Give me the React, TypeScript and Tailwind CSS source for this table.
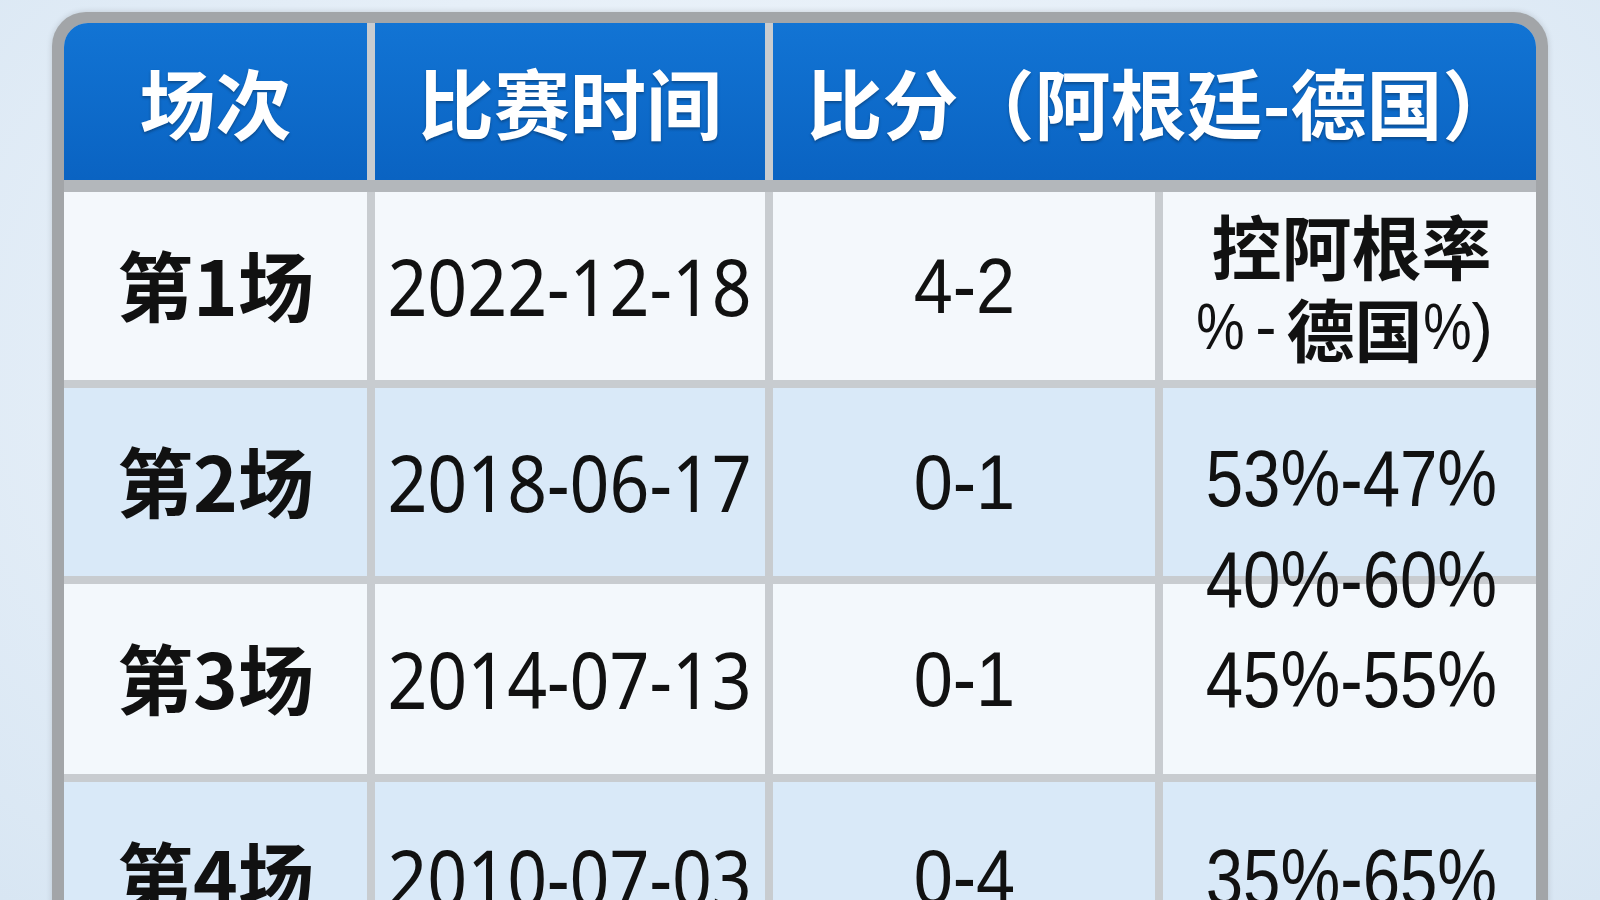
import React from "react";

const CJK = "font-['Noto_Sans_CJK_SC','Noto_Sans',sans-serif]";
const NUM = "font-['Liberation_Sans',Arial,sans-serif]";
const DATE = "font-['Noto_Sans','Liberation_Sans',sans-serif]";

type Row = {
  name: string;
  date: string;
  score: string;
  pos: string | null;
  extra?: string;
  bg: string;
  h: string;
};

const rows: Row[] = [
  { name: "第1场", date: "2022-12-18", score: "4-2", pos: null, bg: "bg-[#f4f8fc]", h: "h-[188px]" },
  { name: "第2场", date: "2018-06-17", score: "0-1", pos: "53%-47%", extra: "40%-60%", bg: "bg-[#d9e9f8]", h: "h-[188px]" },
  { name: "第3场", date: "2014-07-13", score: "0-1", pos: "45%-55%", bg: "bg-[#f3f8fc]", h: "h-[190px]" },
  { name: "第4场", date: "2010-07-03", score: "0-4", pos: "35%-65%", bg: "bg-[#d9e9f8]", h: "h-[190px]" },
];

function Pct({ text }: { text: string }) {
  return (
    <span className={`${NUM} inline-block scale-x-[0.84] whitespace-nowrap text-[80px] leading-[101px] text-[#111]`}>{text}</span>
  );
}

export default function App() {
  return (
    <div className="w-[1600px] h-[900px] overflow-hidden bg-[radial-gradient(ellipse_at_50%_40%,#f5f9fd_0%,#e6eff8_55%,#d8e6f3_100%)]">
      <div className="ml-[52px] mt-[12px] w-[1496px] rounded-t-[34px] bg-[#a2a5a8] px-[12px] pt-[11px] shadow-[0_0_6px_rgba(0,0,0,0.15)]">
        <div className="flex flex-col overflow-hidden rounded-t-[24px] bg-[#c8ccd0]">
          {/* header */}
          <div className="grid h-[157px] grid-cols-[303px_390px_763px] gap-x-[8px]">
            {[
              <span key="a">场次</span>,
              <span key="b">比赛时间</span>,
              <span key="c" className="pr-[22px]">
                比分（阿根廷-德国<span className="[font-feature-settings:'halt']">）</span>
              </span>,
            ].map((t, i) => (
              <div
                key={i}
                className={`${CJK} flex items-center justify-center whitespace-nowrap bg-linear-to-b from-[#1274d4] to-[#0a63c2] text-[76px] font-bold leading-none text-white [text-shadow:0_2px_3px_rgba(0,0,0,0.3)]`}
              >
                <span className="-mt-[2px]">{t}</span>
              </div>
            ))}
          </div>
          <div className="h-[12px] bg-[#b3b7bb]" />
          {/* body */}
          <div className="flex flex-col gap-y-[8px]">
            {rows.map((r) => (
              <div key={r.name} className={`grid ${r.h} grid-cols-[303px_390px_382px_373px] grid-rows-[100%] gap-x-[8px]`}>
                <div className={`${r.bg} ${CJK} flex items-center justify-center whitespace-nowrap text-[76px] font-bold leading-none text-[#111]`}>
                  <span className="-mt-[6px]">{r.name}</span>
                </div>
                <div className={`${r.bg} flex items-center justify-center`}>
                  <span className={`${DATE} inline-block scale-x-[0.895] whitespace-nowrap text-[78px] leading-none text-[#111]`}>{r.date}</span>
                </div>
                <div className={`${r.bg} flex items-center justify-center`}>
                  <span className={`${NUM} inline-block scale-x-[0.9] whitespace-nowrap text-[78px] leading-none text-[#111]`}>{r.score}</span>
                </div>
                {r.pos === null ? (
                  <div className={`${r.bg} flex flex-col items-center justify-center pl-[4px] text-[#111]`}>
                    <div className={`${CJK} whitespace-nowrap text-[70px] font-bold leading-[83px]`}>控阿根率</div>
                    <div className="-ml-[14px] flex items-center whitespace-nowrap leading-[83px]">
                      <span className={`${NUM} -mx-[4px] inline-block scale-x-[0.85] text-[64px]`}>%</span>
                      <span className={`${NUM} mx-[10px] inline-block text-[64px]`}>-</span>
                      <span className={`${CJK} text-[68px] font-bold`}>德国</span>
                      <span className={`${NUM} -mx-[4px] inline-block scale-x-[0.85] text-[64px]`}>%</span>
                      <span className={`${NUM} inline-block text-[64px]`}>)</span>
                    </div>
                  </div>
                ) : r.extra ? (
                  <div className={`${r.bg} flex flex-col items-center pl-[4px] pt-[40px]`}>
                    <Pct text={r.pos} />
                    <span className="relative z-10">
                      <Pct text={r.extra} />
                    </span>
                  </div>
                ) : (
                  <div className={`${r.bg} flex items-center justify-center pl-[4px]`}>
                    <Pct text={r.pos} />
                  </div>
                )}
              </div>
            ))}
          </div>
        </div>
      </div>
    </div>
  );
}
